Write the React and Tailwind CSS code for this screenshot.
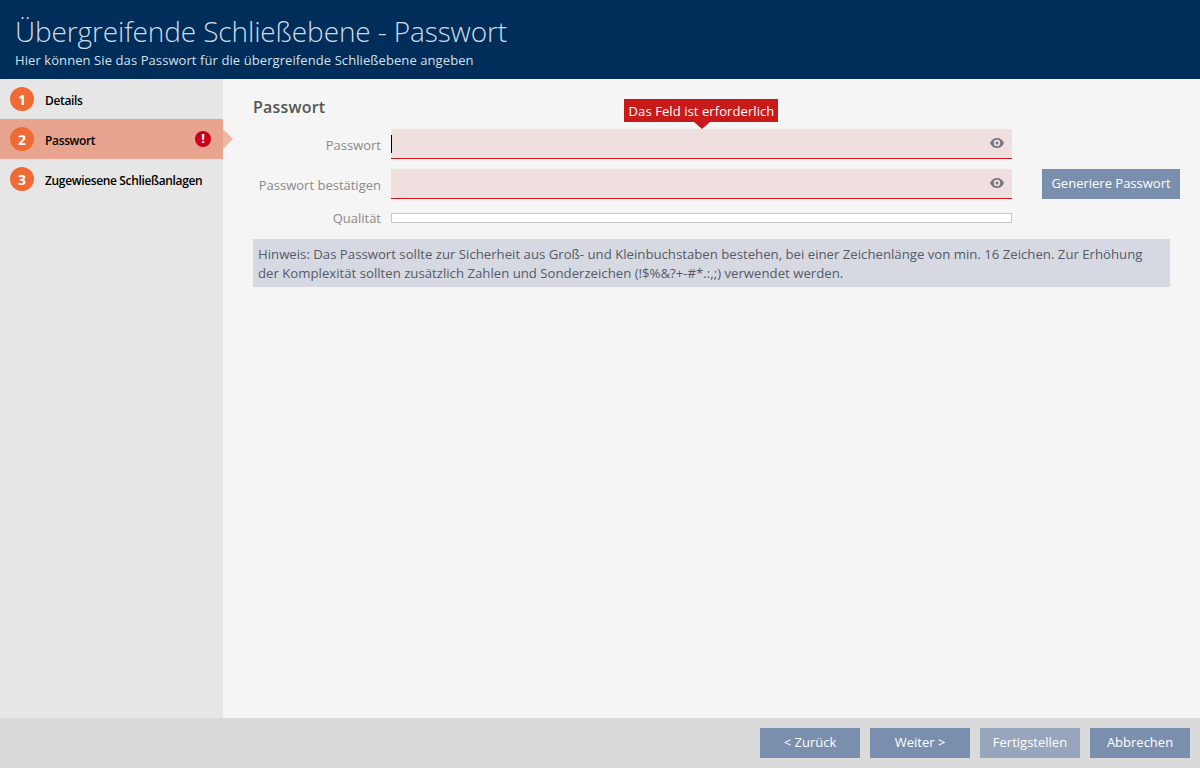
import React from 'react';

const steps = [
  { n: 1, label: 'Details' },
  { n: 2, label: 'Passwort', active: true, error: true },
  { n: 3, label: 'Zugewiesene Schließanlagen' },
];

function Eye() {
  return (
    <svg width="14" height="10" viewBox="0 0 14 10" className="text-[#77777f] mb-[1px]">
      <path fill="currentColor" fillRule="evenodd" d="M7 0C3.8 0 1.2 2 0 5c1.2 3 3.8 5 7 5s5.800-2 7-5c-1.200-3-3.800-5-7-5Zm0 1.800a3.200 3.200 0 1 1 0 6.400 3.200 3.200 0 0 1 0-6.400Z" />
      <circle cx="7" cy="5" r="1.500" fill="currentColor" />
    </svg>
  );
}

function StepRow({ step }) {
  return (
    <div className={`h-10 flex items-center pl-[10px] pr-3 relative ${step.active ? 'bg-[#e9a48f]' : ''}`}>
      <div className="w-6 h-6 rounded-full bg-[#f06a36] text-white text-[14px] font-bold flex items-center justify-center shrink-0">
        {step.n}
      </div>
      <div className="ml-[11px] pt-[3px] text-[12px] tracking-[-0.35px] font-semibold text-black flex-1 whitespace-nowrap">{step.label}</div>
      {step.error && (
        <div className="w-4 h-4 rounded-full bg-[#c8001e] text-white text-[13px] font-bold flex items-center justify-center">!</div>
      )}
      {step.active && (
        <div className="absolute left-full top-[10px] w-0 h-0 border-y-[10px] border-y-transparent border-l-[10px] border-l-[#f0b6a4]" />
      )}
    </div>
  );
}

function PasswordInput({ children }) {
  return (
    <div className="h-[30px] bg-[#f0dfdf] border-b border-[#d01818] flex items-center justify-end pr-[8px] relative">
      {children}
      <Eye />
    </div>
  );
}

function Button({ children, disabled, className = '' }) {
  return (
    <button className={`h-[30px] text-[13px] text-white whitespace-nowrap ${disabled ? 'bg-[#97a6bc]' : 'bg-[#7a8fae]'} ${className}`}>
      {children}
    </button>
  );
}

function Label({ children }) {
  return <label className="text-[13px] leading-[18px] text-[#8a8a8a] text-right pt-[2px]">{children}</label>;
}

export default function App() {
  return (
    <div className="w-[1200px] h-[768px] flex flex-col overflow-hidden bg-[#f5f5f5] font-['Open_Sans',sans-serif]">
      <header className="h-[79px] bg-[#002d5a] pl-[15px] shrink-0">
        <div className="text-[28px] font-light text-[#cfdbe6] leading-[38px] pt-[12px] h-[51px] tracking-[-0.12px]">Übergreifende Schließebene - Passwort</div>
        <div className="text-[13px] tracking-[0.085px] text-[#d5e0ea] leading-[18px]">Hier können Sie das Passwort für die übergreifende Schließebene angeben</div>
      </header>

      <div className="flex-1 flex min-h-0">
        <aside className="w-[223px] bg-[#e6e6e6] shrink-0">
          {steps.map(s => <StepRow key={s.n} step={s} />)}
        </aside>

        <main className="flex-1 pl-[30px] pr-[20px] pt-[17px]">
          <h2 className="text-[16px] tracking-[0.2px] font-semibold text-[#555555] leading-[22px] h-[33px]">Passwort</h2>

          <div className="grid grid-cols-[128px_621px_1fr] gap-x-[10px] gap-y-[10px] items-center">
            <Label>Passwort</Label>
            <PasswordInput>
              <div className="absolute left-0 top-[6px] w-px h-[18px] bg-black" />
              <div className="absolute left-[233px] -top-[30px] w-[154px] h-[23px] pl-[1px] bg-[#c91a1a] text-white text-[13px] tracking-[0.08px] leading-[24px] text-center whitespace-nowrap">
                Das Feld ist erforderlich
                <div className="absolute left-[70px] top-full w-0 h-0 border-x-[8px] border-x-transparent border-t-[7px] border-t-[#c91a1a]" />
              </div>
            </PasswordInput>
            <div />

            <Label>Passwort bestätigen</Label>
            <PasswordInput />
            <Button className="ml-[20px]">Generiere Passwort</Button>

            <label className="text-[13px] leading-[18px] text-[#8a8a8a] text-right">Qualität</label>
            <div className="h-[10px] bg-white border border-[#c8c8c8]" />
            <div />
          </div>

          <div className="mt-[12px] mr-[10px] h-[48px] bg-[#d6d9e2] px-[5px] pt-[6px] text-[13.2px] leading-[19px] text-[#555a66] whitespace-nowrap">
            Hinweis: Das Passwort sollte zur Sicherheit aus Groß- und Kleinbuchstaben bestehen, bei einer Zeichenlänge von min. 16 Zeichen. Zur Erhöhung
            <br />
            der Komplexität sollten zusätzlich Zahlen und Sonderzeichen (!$%&?+-#*.:,;) verwendet werden.
          </div>
        </main>
      </div>

      <footer className="h-[50px] bg-[#dadada] shrink-0 flex items-center justify-end gap-[10px] pr-[10px]">
        <Button className="w-[100px]">&lt; Zurück</Button>
        <Button className="w-[100px]">Weiter &gt;</Button>
        <Button className="w-[100px]" disabled>Fertigstellen</Button>
        <Button className="w-[100px]">Abbrechen</Button>
      </footer>
    </div>
  );
}
